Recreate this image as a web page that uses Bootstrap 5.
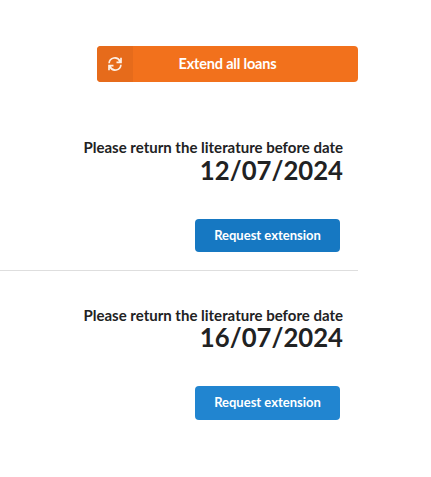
<!DOCTYPE html>
<html lang="en">
<head>
<meta charset="utf-8">
<meta name="viewport" content="width=device-width, initial-scale=1">
<title>Loans</title>
<link href="https://cdn.jsdelivr.net/npm/bootstrap@5.3.0/dist/css/bootstrap.min.css" rel="stylesheet">
<style>
body { font-family: Lato, sans-serif; color: #212223; background: #fff; overflow: hidden; }
.loans { width: 358px; padding-top: 46px; }
.btn-extend { width: 261px; height: 36px; background: #f2711c; border-radius: 4px; font-size: 14.5px; letter-spacing: -.18px; color: #fff; }
.btn-extend:hover { background: #f26202; color: #fff; }
.btn-extend .icon-cell { width: 36px; background: #e66b1b; }
.btn-extend .label-text { padding-right: 36px; line-height: 36px; }
.loan { padding-right: 15px; }
.loan-first { height: 189px; padding-top: 55px; }
.loan-next { padding-top: 34px; }
.loan-note { font-size: 15px; line-height: 20px; }
.loan-next .loan-note { height: 19px; }
.loan-date { font-size: 25.7px; line-height: 26px; }
.btn-request { width: 145px; height: 33px; margin: 36px 3px 0 0; border-radius: 4px; font-size: 13px; line-height: 33px; background: #1678c2; color: #fff; }
.loan-next .btn-request { height: 34px; line-height: 32px; padding-bottom: 2px !important; background: #2185d0; }
.btn-request:hover { background: #1678c2; color: #fff; }
.split { border-bottom: 1px solid #dedede; }
</style>
</head>
<body>
<main class="loans">
  <div class="d-flex justify-content-end">
    <button class="btn btn-extend border-0 p-0 d-flex fw-bold overflow-hidden">
      <span class="icon-cell h-100 d-flex align-items-center justify-content-center flex-shrink-0">
        <svg width="14" height="14" viewBox="0 0 14 14" fill="none" stroke="#fdf0e6" stroke-width="1.7" stroke-linejoin="miter" aria-hidden="true">
          <path d="M1.1 6.2A5.7 5.7 0 0 1 12 4.3M13 .8v4.5H8.5M12.9 7.8A5.7 5.7 0 0 1 2 9.7M1 13.2V8.7h4.5"/>
        </svg>
      </span>
      <span class="label-text flex-grow-1 text-center">Extend all loans</span>
    </button>
  </div>
  <section class="loan loan-first split d-flex flex-column align-items-end fw-bold">
    <div class="loan-note">Please return the literature before date</div>
    <div class="loan-date">12/07/2024</div>
    <button class="btn btn-request border-0 p-0 fw-bold">Request extension</button>
  </section>
  <section class="loan loan-next d-flex flex-column align-items-end fw-bold">
    <div class="loan-note">Please return the literature before date</div>
    <div class="loan-date">16/07/2024</div>
    <button class="btn btn-request border-0 p-0 fw-bold">Request extension</button>
  </section>
</main>
<script src="https://cdn.jsdelivr.net/npm/bootstrap@5.3.0/dist/js/bootstrap.bundle.min.js"></script>
</body>
</html>
